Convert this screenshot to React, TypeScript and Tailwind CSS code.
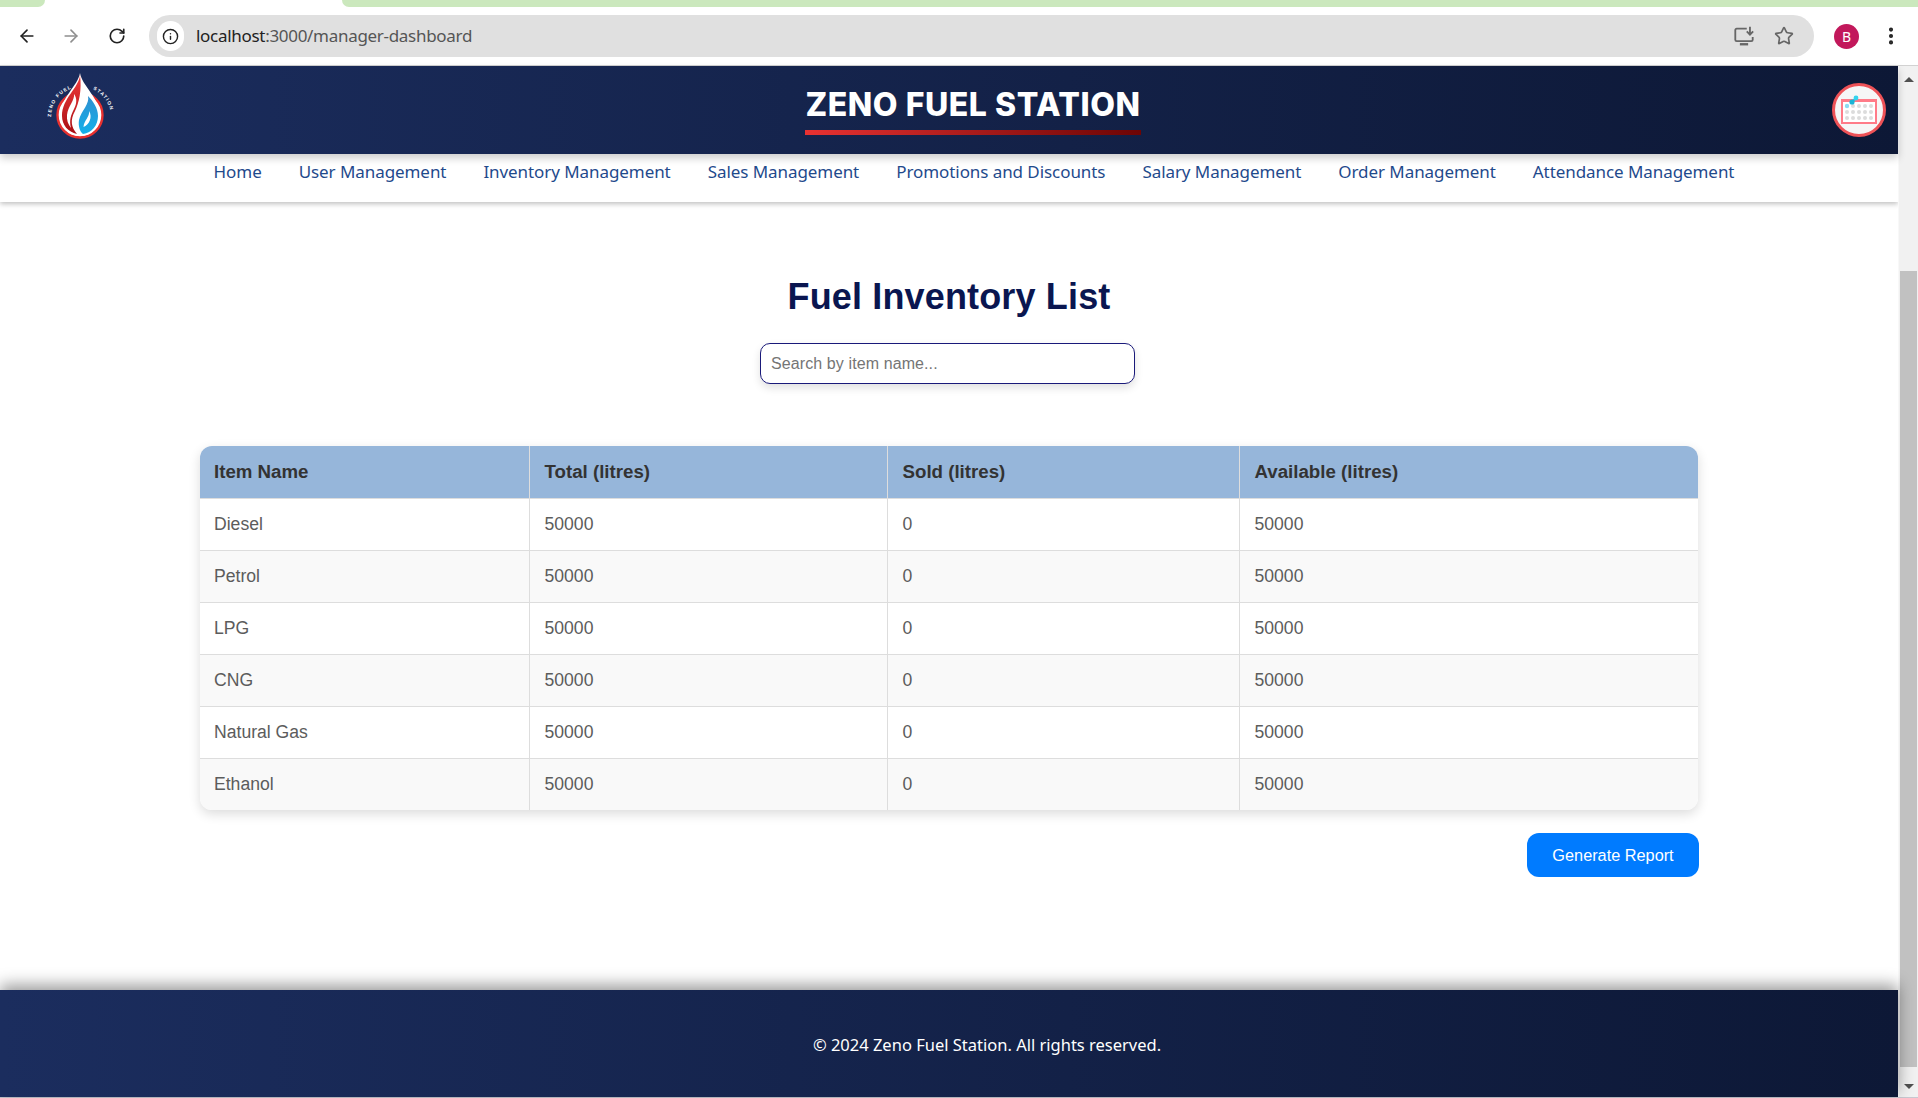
import React from "react";
import { ArrowLeft, ArrowRight, RotateCw, Info, Star, EllipsisVertical } from "lucide-react";

const navItems = ["Home", "User Management", "Inventory Management", "Sales Management", "Promotions and Discounts", "Salary Management", "Order Management", "Attendance Management"];
const rows = ["Diesel", "Petrol", "LPG", "CNG", "Natural Gas", "Ethanol"];

function Logo() {
  return (
    <svg width="70" height="70" viewBox="0 0 70 70" className="shrink-0">
      <defs>
        <path id="ring" d="M7 47 A30 30 0 0 1 67 47" fill="none" />
        <linearGradient id="red" x1="0" y1="0" x2="0" y2="1"><stop offset="0" stopColor="#f03a3a" /><stop offset="1" stopColor="#a80f14" /></linearGradient>
        <linearGradient id="blue" x1="0" y1="0" x2="0" y2="1"><stop offset="0" stopColor="#2f8fd0" /><stop offset="1" stopColor="#12b0ea" /></linearGradient>
      </defs>
      <text fontFamily="'Liberation Sans', sans-serif" fontSize="4.800" fontWeight="700" fill="#ffffff" letterSpacing="1.200">
        <textPath href="#ring">ZENO FUEL</textPath>
      </text>
      <text fontFamily="'Liberation Sans', sans-serif" fontSize="4.800" fontWeight="700" fill="#ffffff" letterSpacing="1.200">
        <textPath href="#ring" startOffset="63%">STATION</textPath>
      </text>
      <circle cx="36" cy="45" r="22.5" fill="#ffffff" stroke="#e8312f" strokeWidth="2.4" />
      <path d="M36 3 C38 16 56 28 56 46 A20 20 0 0 1 16 46 C16 28 34 16 36 3 Z" fill="#ffffff" />
      <path d="M36 5 C35 18 18 28 18 46 C18 55 24 62 33 64 C27 57 26 50 31 41 C35 33 38 20 36 5 Z" fill="url(#red)" />
      <path d="M30 24 C31 30 24 36 23 45 C22.5 50 24 54 27 58 C25 50 27 45 30 39 C33 33 33 28 30 24 Z" fill="#ffffff" />
      <path d="M44 26 C46 34 37 41 35 50 C34 56 36 62 39 64 C48 63 54 55 54 46 C54 38 49 31 44 26 Z" fill="url(#blue)" />
      <path d="M45 41 C46 47 40 50 39.500 57 C45 55 49 47 45 41 Z" fill="#ffffff" />
    </svg>
  );
}

function CalendarBadge() {
  const dots: React.ReactNode[] = [];
  for (let r = 0; r < 3; r++) {
    for (let c = 0; c < 5; c++) {
      if (r === 0 && c === 0) continue;
      dots.push(<circle key={`${r}-${c}`} cx={12 + c * 6} cy={20 + r * 6} r="2" fill="#dcdcdc" />);
    }
  }
  return (
    <div className="w-[54px] h-[54px] rounded-full bg-[#f6f6f6] border-[3px] border-[#ee5257] shrink-0 flex items-center justify-center">
      <svg width="48" height="48" viewBox="0 0 48 48">
        <rect x="7" y="14" width="34" height="23" fill="#ffffff" stroke="#ff7b88" strokeWidth="2" />
        <rect x="6" y="13" width="36" height="3" fill="#ff7b88" />
        {dots}
        <circle cx="12" cy="20" r="2.200" fill="#8bdcf2" />
        <path d="M17 16 L21 12" stroke="#29c4e4" strokeWidth="2" />
        <circle cx="17" cy="16" r="2.600" fill="#19b5d6" />
        <circle cx="21" cy="12" r="2.400" fill="#33d3ee" />
      </svg>
    </div>
  );
}

function InstallIcon() {
  return (
    <svg width="22" height="22" viewBox="0 0 24 24" fill="none" stroke="#666666" strokeWidth="2" className="shrink-0">
      <path d="M15 4 H4 A1.500 1.500 0 0 0 2.500 5.500 V16 A1.500 1.500 0 0 0 4 17.500 H20 A1.500 1.500 0 0 0 21.500 16 V13" />
      <path d="M7.500 21 H16.500" strokeWidth="2.600" />
      <path d="M18.500 2 V10 M15 7 L18.500 10.500 L22 7" />
    </svg>
  );
}

export default function App() {
  return (
    <div className="w-full h-[1098px] overflow-hidden flex flex-col bg-white font-['Liberation_Sans',sans-serif]">
      {/* Browser chrome */}
      <div className="bg-[#cbe8bd] shrink-0">
        <div className="h-[7px] flex bg-white">
          <div className="w-[45px] bg-[#cbe8bd] rounded-br-[8px]" />
          <div className="w-[297px] bg-white" />
          <div className="flex-1 bg-[#cbe8bd] rounded-bl-[8px]" />
        </div>
        <div className="h-[59px] bg-white border-b border-[#d2d2d2] flex items-center pl-[17px] pr-[12px]">
          <ArrowLeft size={20} strokeWidth={2} color="#222222" className="shrink-0" />
          <ArrowRight size={20} strokeWidth={2} color="#8f8f8f" className="ml-[24px] shrink-0" />
          <RotateCw size={18} strokeWidth={2.2} color="#222222" className="ml-[27px] shrink-0" />
          <div className="ml-[23px] w-[1665px] h-[42px] rounded-full bg-[#e0e0e0] flex items-center pl-[8px] pr-[20px]">
            <div className="w-[27px] h-[30px] rounded-full bg-white flex items-center justify-center shrink-0">
              <Info size={17} strokeWidth={2} color="#222222" />
            </div>
            <div className="ml-[12px] text-[17px] text-[#555555] font-['Noto_Sans',sans-serif] flex-1 tracking-[-0.3px]">
              <span className="text-[#222222]">localhost</span>:3000/manager-dashboard
            </div>
            <InstallIcon />
            <Star size={20} strokeWidth={2} color="#666666" className="ml-[19px] shrink-0" />
          </div>
          <div className="ml-[20px] w-[25px] h-[25px] rounded-full bg-[#c2185b] text-white text-[14px] flex items-center justify-center shrink-0 font-['Noto_Sans',sans-serif]">B</div>
          <EllipsisVertical size={22} strokeWidth={2.5} color="#222222" className="ml-[21px] shrink-0" />
        </div>
      </div>

      {/* Page + scrollbar */}
      <div className="flex-1 flex min-h-0">
        <div className="flex-1 flex flex-col min-w-0">
          <header className="h-[88px] shrink-0 flex justify-between pl-[44px] pr-[12px] bg-gradient-to-r from-[#1b2d5e] to-[#0d1836] relative z-10 shadow-[0_4px_8px_rgba(0,0,0,0.2)]">
            <div className="pt-[4px]"><Logo /></div>
            <div className="flex flex-col items-stretch pt-[20px]">
              <div className="text-[32px] leading-[38px] font-extrabold text-white tracking-[0.55px] font-['Inter',sans-serif]">ZENO FUEL STATION</div>
              <div className="h-[5px] mt-[6px] bg-gradient-to-r from-[#e93232] to-[#6d0505]" />
            </div>
            <div className="flex items-center"><CalendarBadge /></div>
          </header>

          <nav className="h-[48px] shrink-0 flex justify-center gap-[37px] pl-[50px] pt-[4px] bg-white shadow-[0_2px_5px_rgba(0,0,0,0.25)] font-['Noto_Sans',sans-serif] text-[17px] leading-[28px] tracking-[-0.07px] text-[#1f4a8c]">
            {navItems.map((n) => (
              <span key={n} className="whitespace-nowrap">{n}</span>
            ))}
          </nav>

          <main className="flex-1 flex flex-col items-center min-h-0">
            <h1 className="mt-[74px] text-[36px] leading-[42px] font-bold text-[#0a1650] tracking-[0.15px]">Fuel Inventory List</h1>
            <input
              placeholder="Search by item name..."
              className="mt-[25px] mr-[3px] w-[375px] h-[41px] px-[10px] rounded-[10px] border border-[#1a1a7a] bg-white text-[16px] tracking-[0.1px] shadow-[0_4px_8px_rgba(0,0,0,0.12)] placeholder:text-[#757575] outline-none"
            />
            <div className="mt-[62px] w-[1498px] rounded-[12px] overflow-hidden shadow-[0_4px_12px_rgba(0,0,0,0.14)]">
              <table className="w-full table-fixed border-collapse text-[17.6px]">
                <colgroup>
                  <col className="w-[329px]" />
                  <col className="w-[358px]" />
                  <col className="w-[352px]" />
                  <col className="w-[459px]" />
                </colgroup>
                <thead>
                  <tr className="h-[52px] bg-[#96b6da] text-[#333333] text-[18.7px]">
                    {["Item Name", "Total (litres)", "Sold (litres)", "Available (litres)"].map((h, i) => (
                      <th key={h} className={`text-left font-bold ${i === 0 ? "pl-[14px] pr-[15px]" : "px-[15px]"} ${i < 3 ? "border-r border-[#dddddd]" : ""}`}>{h}</th>
                    ))}
                  </tr>
                </thead>
                <tbody>
                  {rows.map((r, idx) => (
                    <tr key={r} className={`h-[52px] text-[#5c5c5c] border-t border-[#dddddd] ${idx % 2 ? "bg-[#f9f9f9]" : "bg-white"}`}>
                      <td className="pl-[14px] pr-[15px] border-r border-[#dddddd]">{r}</td>
                      <td className="px-[15px] border-r border-[#dddddd]">50000</td>
                      <td className="px-[15px] border-r border-[#dddddd]">0</td>
                      <td className="px-[15px]">50000</td>
                    </tr>
                  ))}
                </tbody>
              </table>
            </div>
            <div className="w-[1500px] flex justify-end mt-[23px]">
              <button className="w-[172px] h-[44px] rounded-[12px] bg-[#007bff] text-white text-[16.3px]">Generate Report</button>
            </div>
          </main>

          <footer className="h-[107px] shrink-0 flex items-center justify-center pl-[76px] pt-[4px] bg-gradient-to-r from-[#1b2d5e] to-[#0d1836] shadow-[0_-5px_15px_rgba(0,0,0,0.4)] relative text-white text-[16.5px] font-['Noto_Sans',sans-serif]">
            © 2024 Zeno Fuel Station. All rights reserved.
          </footer>
        </div>

        <div className="w-[20px] shrink-0 bg-[#f1f1f1] flex flex-col items-center border-l border-[#f8f8f8]">
          <div className="h-[205px] w-full flex justify-center pt-[11px] shrink-0">
            <div className="w-0 h-0 border-l-[5px] border-r-[5px] border-b-[5px] border-l-transparent border-r-transparent border-b-[#505050]" />
          </div>
          <div className="flex-1 w-[17px] bg-[#c1c1c1]" />
          <div className="h-[30px] w-full flex justify-center pt-[17px] shrink-0">
            <div className="w-0 h-0 border-l-[5px] border-r-[5px] border-t-[5px] border-l-transparent border-r-transparent border-t-[#505050]" />
          </div>
        </div>
      </div>
      <div className="h-px shrink-0 bg-[#c8c8d0]" />
    </div>
  );
}
